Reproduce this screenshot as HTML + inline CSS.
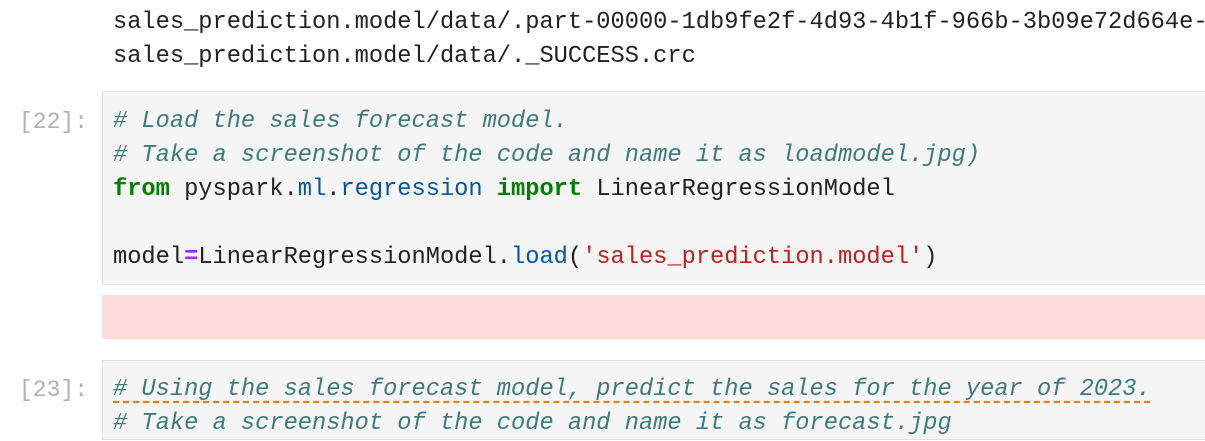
<!DOCTYPE html><html><head><style>
body{margin:0;width:1205px;height:425px;overflow:hidden;background:#fff;position:relative;font-family:"Liberation Mono","DejaVu Sans Mono",monospace;font-size:23.7px;}
.l{position:absolute;left:113px;white-space:pre;line-height:34px;height:34px;color:#212121}
.p{position:absolute;right:1117px;color:#b0b0b0;line-height:34px;white-space:pre;font-size:23px}
.box{position:absolute;left:102px;width:1110px;background:#f5f5f5;border:1px solid #dfdfdf;box-sizing:border-box}
.c{color:#3d7b7b;font-style:italic}
.k{color:#008000;font-weight:bold}
.n{color:#0055aa}
.s{color:#ba2121}
.o{color:#aa22ff;font-weight:bold}
.u{text-decoration:underline dashed #f57c00;text-underline-offset:6px}
</style></head><body>
<div class="l" style="top:6px">sales_prediction.model/data/.part-00000-1db9fe2f-4d93-4b1f-966b-3b09e72d664e-</div>
<div class="l" style="top:40px">sales_prediction.model/data/._SUCCESS.crc</div>
<div class="box" style="top:91px;height:194px"></div>
<div class="p" style="top:105px">[22]:</div>
<div class="l c" style="top:105px"># Load the sales forecast model.</div>
<div class="l c" style="top:139px"># Take a screenshot of the code and name it as loadmodel.jpg)</div>
<div class="l" style="top:173px"><span class="k">from</span> pyspark.<span class="n">ml</span>.<span class="n">regression</span> <span class="k">import</span> LinearRegressionModel</div>
<div class="l" style="top:241px">model<span class="o">=</span>LinearRegressionModel.<span class="n">load</span>(<span class="s">'sales_prediction.model'</span>)</div>
<div style="position:absolute;left:102px;top:295px;width:1110px;height:44px;background:#fddcdc"></div>
<div class="box" style="top:360px;height:80px"></div>
<div class="p" style="top:373px">[23]:</div>
<div class="l c" style="top:373px"><span class="u"># Using the sales forecast model, predict the sales for the year of 2023.</span></div>
<div class="l c" style="top:407px"># Take a screenshot of the code and name it as forecast.jpg</div>
</body></html>
